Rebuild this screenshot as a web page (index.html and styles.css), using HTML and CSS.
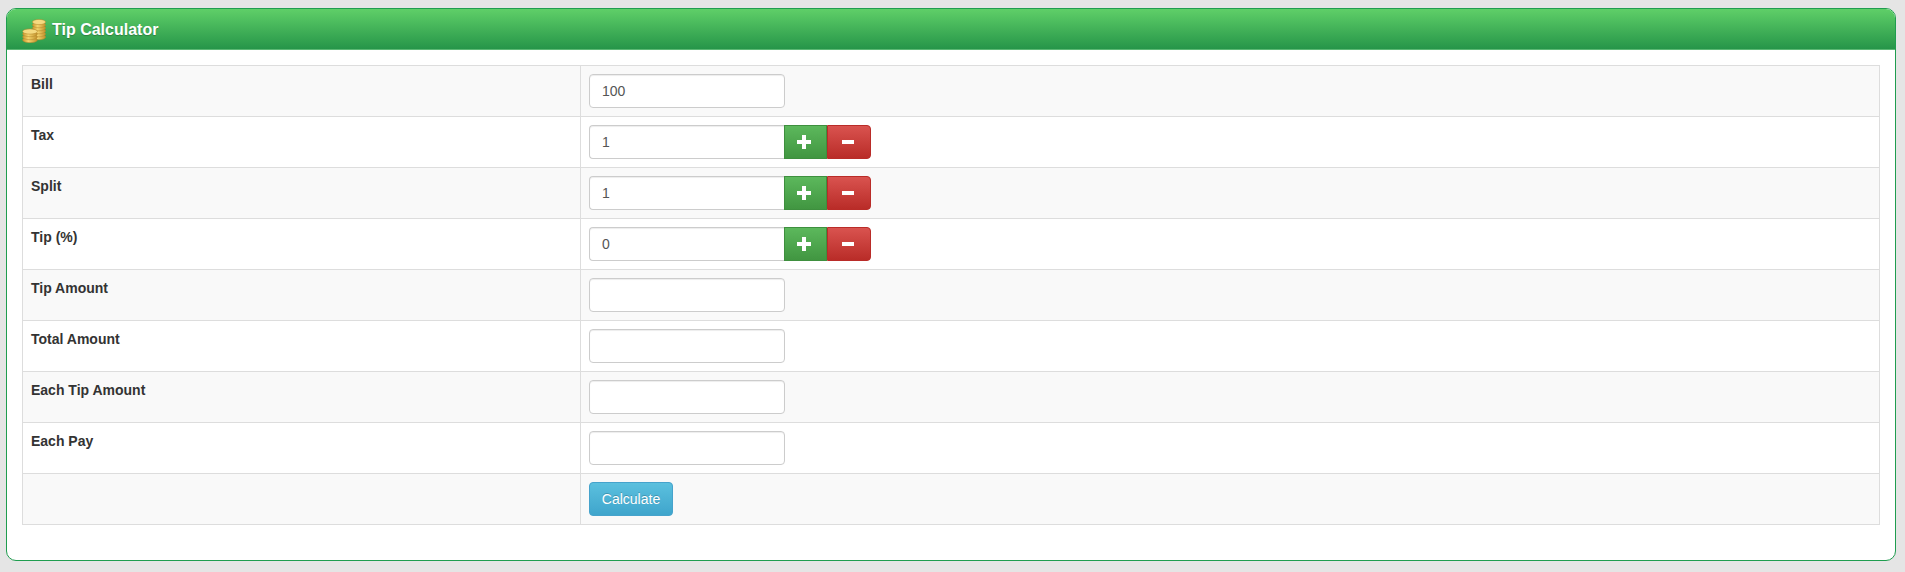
FILE: index.html
```html
<!DOCTYPE html>
<html lang="en">
<head>
<meta charset="utf-8">
<title>Tip Calculator</title>
<link rel="stylesheet" href="styles.css">
</head>
<body>
<section class="panel">
  <header class="panel-head">
    <svg class="coins" width="24" height="24" viewBox="0 0 24 24" aria-hidden="true">
      <defs>
        <linearGradient id="coin" x1="0" x2="1" y1="0" y2="0">
          <stop offset="0" stop-color="#c8982f"/>
          <stop offset="0.4" stop-color="#f3d36c"/>
          <stop offset="1" stop-color="#c1912c"/>
        </linearGradient>
      </defs>
      <g fill="url(#coin)" stroke="#b5862a" stroke-width="0.5">
        <ellipse cx="17" cy="18" rx="6.6" ry="2.8"/>
        <ellipse cx="17" cy="15" rx="6.6" ry="2.8"/>
        <ellipse cx="17" cy="12" rx="6.6" ry="2.8"/>
        <ellipse cx="17" cy="9" rx="6.6" ry="2.8"/>
        <ellipse cx="17" cy="6" rx="6.6" ry="2.8"/>
        <ellipse cx="17" cy="3" rx="6.6" ry="2.6" fill="#f5da80"/>
        <ellipse cx="8" cy="21" rx="7.4" ry="2.7"/>
        <ellipse cx="8" cy="18" rx="7.4" ry="2.7"/>
        <ellipse cx="8" cy="15" rx="7.4" ry="2.7"/>
        <ellipse cx="8" cy="12.5" rx="7.4" ry="2.6" fill="#f5da80"/>
      </g>
    </svg>
    <h1 class="panel-title">Tip Calculator</h1>
  </header>
  <div class="panel-body">
    <table class="form-table">
      <tr><th>Bill</th><td><input class="field" type="text" value="100"></td></tr>
      <tr><th>Tax</th><td><div class="stepper"><input class="field" type="text" value="1"><button class="btn plus" type="button"><svg width="14" height="14" viewBox="0 0 14 14"><path d="M5 0h4v5h5v4H9v5H5V9H0V5h5z" fill="#fff"/></svg></button><button class="btn minus" type="button"><svg width="12" height="14" viewBox="0 0 12 14"><path d="M0 5h12v4H0z" fill="#fff"/></svg></button></div></td></tr>
      <tr><th>Split</th><td><div class="stepper"><input class="field" type="text" value="1"><button class="btn plus" type="button"><svg width="14" height="14" viewBox="0 0 14 14"><path d="M5 0h4v5h5v4H9v5H5V9H0V5h5z" fill="#fff"/></svg></button><button class="btn minus" type="button"><svg width="12" height="14" viewBox="0 0 12 14"><path d="M0 5h12v4H0z" fill="#fff"/></svg></button></div></td></tr>
      <tr><th>Tip (%)</th><td><div class="stepper"><input class="field" type="text" value="0"><button class="btn plus" type="button"><svg width="14" height="14" viewBox="0 0 14 14"><path d="M5 0h4v5h5v4H9v5H5V9H0V5h5z" fill="#fff"/></svg></button><button class="btn minus" type="button"><svg width="12" height="14" viewBox="0 0 12 14"><path d="M0 5h12v4H0z" fill="#fff"/></svg></button></div></td></tr>
      <tr><th>Tip Amount</th><td><input class="field" type="text"></td></tr>
      <tr><th>Total Amount</th><td><input class="field" type="text"></td></tr>
      <tr><th>Each Tip Amount</th><td><input class="field" type="text"></td></tr>
      <tr><th>Each Pay</th><td><input class="field" type="text"></td></tr>
      <tr><th></th><td><button class="calc" type="button">Calculate</button></td></tr>
    </table>
  </div>
</section>
</body>
</html>
```
FILE: styles.css
```css
* { box-sizing: border-box; }
html, body { height: 100%; }
body {
  margin: 0;
  padding: 8px 9px 0 6px;
  background: #e5e5e5;
  font-family: "Liberation Sans", Arial, sans-serif;
  font-size: 14px;
  line-height: 20px;
  color: #333;
  overflow: hidden;
}
.panel {
  height: 553px;
  background: #fff;
  border: 1px solid #1f9d4f;
  border-radius: 10px;
  overflow: hidden;
}
.panel-head {
  height: 41px;
  display: flex;
  align-items: center;
  gap: 6px;
  padding: 1px 0 0 15px;
  background: linear-gradient(to bottom, #5fcf68, #269549);
  border-bottom: 1px solid #5cb874;
}
.coins { flex: none; margin-top: 2px; }
.panel-title {
  margin: 0;
  font-size: 16px;
  line-height: 20px;
  font-weight: bold;
  color: #fff;
  text-shadow: 0 1px 1px rgba(0, 0, 0, 0.25);
}
.panel-body { padding: 15px; }
.form-table {
  width: 1858px;
  border-collapse: collapse;
  table-layout: fixed;
}
.form-table th, .form-table td {
  height: 51px;
  padding: 8px;
  border: 1px solid #ddd;
  vertical-align: top;
  text-align: left;
}
.form-table th { width: 558px; font-weight: bold; color: #333; }
.form-table tr:nth-child(odd) th, .form-table tr:nth-child(odd) td { background: #f9f9f9; }
.field {
  display: block;
  width: 196px;
  height: 34px;
  padding: 6px 12px;
  font: 14px/20px "Liberation Sans", Arial, sans-serif;
  color: #555;
  background: #fff;
  border: 1px solid #ccc;
  border-radius: 4px;
  box-shadow: inset 0 1px 1px rgba(0, 0, 0, 0.075);
}
.stepper { display: flex; }
.stepper .field { width: 195px; border-radius: 4px 0 0 4px; border-right: 0; }
.btn {
  display: flex;
  align-items: center;
  justify-content: center;
  width: 43px;
  height: 34px;
  padding: 0 3px 0 0;
  border: 1px solid;
}
.plus {
  background: linear-gradient(to bottom, #5cb85c, #419641);
  border-color: #3e8f3e;
}
.minus {
  width: 44px;
  background: linear-gradient(to bottom, #d9534f, #b92c28);
  border-color: #b92c28;
  border-radius: 0 4px 4px 0;
}
.calc {
  display: block;
  width: 84px;
  height: 34px;
  padding: 0;
  font: 14px "Liberation Sans", Arial, sans-serif;
  color: #fff;
  background: linear-gradient(to bottom, #5bc0de, #3fa5cc);
  border: 1px solid #46a3cc;
  border-radius: 4px;
  text-shadow: 0 -1px 0 rgba(0, 0, 0, 0.2);
}
```
